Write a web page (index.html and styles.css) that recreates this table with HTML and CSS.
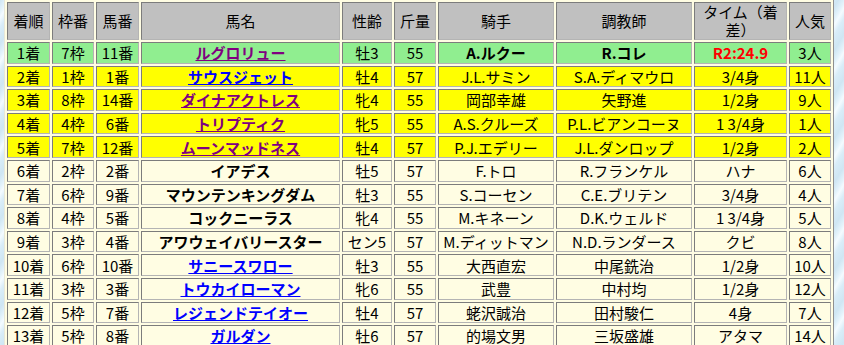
FILE: index.html
```html
<!DOCTYPE html>
<html lang="ja">
<head>
<meta charset="utf-8">
<title>結果</title>
<link rel="stylesheet" href="styles.css">
</head>
<body>
<table class="result">
<colgroup>
<col class="c1"><col class="c2"><col class="c3"><col class="c4"><col class="c5"><col class="c6"><col class="c7"><col class="c8"><col class="c9"><col class="c10">
</colgroup>
<tr class="head">
<th>着順</th><th>枠番</th><th>馬番</th><th>馬名</th><th>性齢</th><th>斤量</th><th>騎手</th><th>調教師</th><th>タイム（着差）</th><th>人気</th>
</tr>
<tr class="win">
<td>1着</td><td>7枠</td><td>11番</td><td><a class="name visited" href="#">ルグロリュー</a></td><td>牡3</td><td>55</td><td class="b">A.ルクー</td><td class="b">R.コレ</td><td class="time">R2:24.9</td><td>3人</td>
</tr>
<tr class="place">
<td>2着</td><td>1枠</td><td>1番</td><td><a class="name" href="#">サウスジェット</a></td><td>牡4</td><td>57</td><td>J.L.サミン</td><td>S.A.ディマウロ</td><td>3/4身</td><td>11人</td>
</tr>
<tr class="place">
<td>3着</td><td>8枠</td><td>14番</td><td><a class="name visited" href="#">ダイナアクトレス</a></td><td>牝4</td><td>55</td><td>岡部幸雄</td><td>矢野進</td><td>1/2身</td><td>9人</td>
</tr>
<tr class="place">
<td>4着</td><td>4枠</td><td>6番</td><td><a class="name visited" href="#">トリプティク</a></td><td>牝5</td><td>55</td><td>A.S.クルーズ</td><td>P.L.ビアンコーヌ</td><td>1 3/4身</td><td>1人</td>
</tr>
<tr class="place">
<td>5着</td><td>7枠</td><td>12番</td><td><a class="name visited" href="#">ムーンマッドネス</a></td><td>牡4</td><td>57</td><td>P.J.エデリー</td><td>J.L.ダンロップ</td><td>1/2身</td><td>2人</td>
</tr>
<tr>
<td>6着</td><td>2枠</td><td>2番</td><td class="b">イアデス</td><td>牡5</td><td>57</td><td>F.トロ</td><td>R.フランケル</td><td>ハナ</td><td>6人</td>
</tr>
<tr>
<td>7着</td><td>6枠</td><td>9番</td><td class="b">マウンテンキングダム</td><td>牡3</td><td>55</td><td>S.コーセン</td><td>C.E.ブリテン</td><td>3/4身</td><td>4人</td>
</tr>
<tr>
<td>8着</td><td>4枠</td><td>5番</td><td class="b">コックニーラス</td><td>牝4</td><td>55</td><td>M.キネーン</td><td>D.K.ウェルド</td><td>1 3/4身</td><td>5人</td>
</tr>
<tr>
<td>9着</td><td>3枠</td><td>4番</td><td class="b">アワウェイバリースター</td><td>セン5</td><td>57</td><td>M.ディットマン</td><td>N.D.ランダース</td><td>クビ</td><td>8人</td>
</tr>
<tr>
<td>10着</td><td>6枠</td><td>10番</td><td><a class="name" href="#">サニースワロー</a></td><td>牡3</td><td>55</td><td>大西直宏</td><td>中尾銑治</td><td>1/2身</td><td>10人</td>
</tr>
<tr>
<td>11着</td><td>3枠</td><td>3番</td><td><a class="name" href="#">トウカイローマン</a></td><td>牝6</td><td>55</td><td>武豊</td><td>中村均</td><td>1/2身</td><td>12人</td>
</tr>
<tr>
<td>12着</td><td>5枠</td><td>7番</td><td><a class="name" href="#">レジェンドテイオー</a></td><td>牡4</td><td>57</td><td>蛯沢誠治</td><td>田村駿仁</td><td>4身</td><td>7人</td>
</tr>
<tr>
<td>13着</td><td>5枠</td><td>8番</td><td><a class="name" href="#">ガルダン</a></td><td>牡6</td><td>57</td><td>的場文男</td><td>三坂盛雄</td><td>アタマ</td><td>14人</td>
</tr>
</table>
</body>
</html>
```

FILE: styles.css
```css
html, body {
  margin: 0;
  padding: 0;
}
body {
  background-color: #d6ecf7;
  background-image: repeating-linear-gradient(120deg, #cfe6f3 0px, #e4f3fb 6px, #f4fbff 9px, #d9edf8 14px, #cfe6f3 22px);
  font-family: "Noto Sans CJK JP", "Noto Sans", sans-serif;
  font-size: 15px;
  color: #000;
}
.result {
  margin: -1px 0 0 4px;
  table-layout: fixed;
  border-collapse: separate;
  border-spacing: 2px;
  border: 1px solid;
  border-color: #e8e8d8 #909090 #909090 #e8e8d8;
  background: #fffde3;
  width: 829px;
}
.c1 { width: 43px; }
.c2 { width: 42px; }
.c3 { width: 43px; }
.c4 { width: 199px; }
.c5 { width: 50px; }
.c6 { width: 42px; }
.c7 { width: 116px; }
.c8 { width: 136px; }
.c9 { width: 93px; }
.c10 { width: 42px; }
.result th, .result td {
  border: 1px solid;
  border-color: #7c7c7c #b4b4b4 #b4b4b4 #7c7c7c;
  padding: 0 1px;
  text-align: center;
  vertical-align: middle;
  line-height: 19px;
  height: 19.6px;
  font-weight: normal;
  white-space: nowrap;
}
.result th {
  background: #c0c0c0;
  white-space: normal;
  height: 36px;
  line-height: 18px;
}
.result td {
  background: #fffde3;
}
.result .win td {
  background: #90ee90;
}
.result .place td {
  background: #ffff00;
}
.result td.b {
  font-weight: bold;
}
.name {
  font-weight: bold;
  color: #0000ff;
  text-decoration: underline;
}
.name.visited {
  color: #800080;
}
.result td.time {
  color: #ff0000;
  font-weight: bold;
}
```
